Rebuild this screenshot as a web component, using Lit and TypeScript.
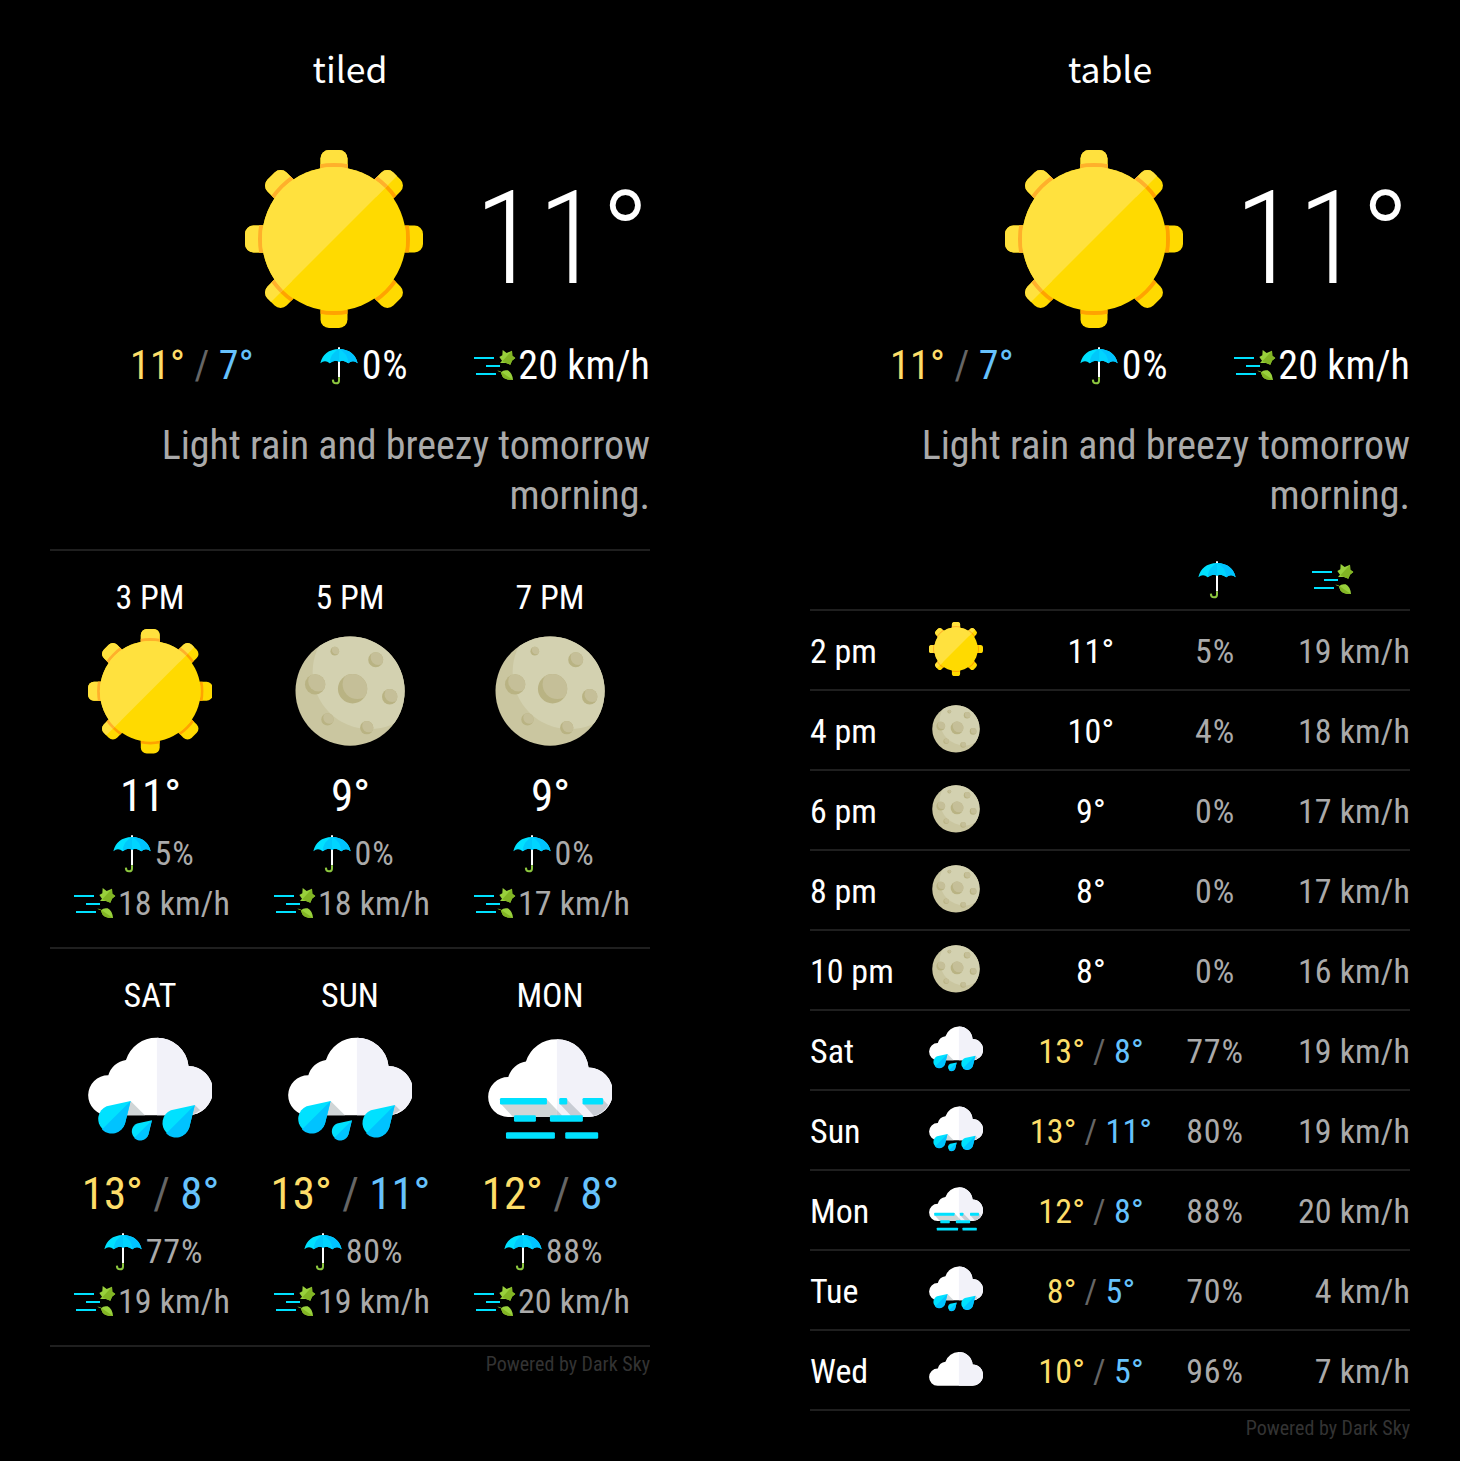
import { LitElement, html, css, svg, nothing } from "lit";
import { customElement, property } from "lit/decorators.js";

const cloudShape = svg`
  <path d="M144 436 A60 60 0 0 1 145 316 A64 64 0 0 1 198 270 A95.500 95.500 0 0 1 291 203 A95 95 0 0 1 386 288 A74 74 0 0 1 384 436 Z" fill="#fff"/>
  <path d="M291 203 A95 95 0 0 1 386 288 A74 74 0 0 1 384 436 L291 436 Z" fill="#f2f2f9"/>`;

const teeth = (fill: string) => [0, 45, 90, 135, 180, 225, 270, 315].map(
  (a) => svg`<rect x="-13.5" y="-89" width="27" height="30" rx="8.5" fill=${fill} transform="rotate(${a})"/>`,
);

const ring = (stroke: string) => svg`<circle r="74" fill="none" stroke=${stroke} stroke-width="4"/>`;

const craters: [number, number, number][] = [
  [134, 62, 13], [257, 88, 22.5], [75, 162, 30.5], [187.5, 175, 44],
  [299, 199, 23], [112, 267, 18.5], [230, 292, 20],
];

const drop = (x: number, y: number, s: number) => svg`
  <g transform="translate(${x} ${y}) scale(${s})">
    <path d="M0 0 L-72 16 A41.5 41.5 0 1 0 -17 69 Z" fill="#00e1ff"/>
    <path d="M0 0 L-86 86 A41.5 41.5 0 0 0 -17 69 Z" fill="#00c3ff"/>
  </g>`;

const bar = (x: number, y: number, w: number) =>
  svg`<rect x=${x} y=${y} width=${w} height="20" rx="4" fill="#00e1ff"/>`;

const icons: Record<string, unknown> = {
  sun: svg`<svg viewBox="-89 -89 178 178">
    <defs>
      <clipPath id="half"><path d="M-90 90 L90 -90 H-90 Z"/></clipPath>
      <clipPath id="teeth">${teeth("#000")}</clipPath>
    </defs>
    ${teeth("#ffda00")}
    <g clip-path="url(#teeth)">${ring("#ffa300")}</g>
    <circle r="72" fill="#ffda00"/>
    <g clip-path="url(#half)">
      ${teeth("#ffe13e")}
      <g clip-path="url(#teeth)">${ring("#ffb02b")}</g>
      <circle r="72" fill="#ffe13e"/>
    </g>
  </svg>`,
  moon: svg`<svg viewBox="-6.5 -4.5 374 374">
    <defs><clipPath id="disc"><circle cx="180" cy="182" r="164"/></clipPath></defs>
    <circle cx="180" cy="182" r="164" fill="#cac6a0"/>
    <circle cx="239" cy="125" r="171.5" fill="#d3d1b0" clip-path="url(#disc)"/>
    ${craters.map(([x, y, r], i) => svg`
      <clipPath id="c${i}"><circle cx=${x} cy=${y} r=${r}/></clipPath>
      <circle cx=${x} cy=${y} r=${r} fill="#b9b383"/>
      <circle cx=${x + r * 0.32} cy=${y - r * 0.3} r=${r} fill="#c5bf98" clip-path="url(#c${i})"/>`)}
  </svg>`,
  rain: svg`<svg viewBox="84 171 374 374">
    ${cloudShape}
    <path d="M212 393 L255 436 H190 Z" fill="#d0d5d6"/>
    <path d="M405 405 L421 421 Q408 432 394 435 Z" fill="#c8ccd2"/>
    ${drop(212, 393, 1)}${drop(276, 451, 0.62)}${drop(405, 405, 1)}
  </svg>`,
  fog: svg`<svg viewBox="84 171 374 374">
    <g transform="translate(0 5)">${cloudShape}</g>
    <path d="M123 402 L159 441 H291 V420 L260 388 Z" fill="#d0d5d6"/>
    <path d="M291 420 L306 436 V441 H291 Z" fill="#c8ccd4"/>
    <path d="M300 402 L334 438 H370 L320 388 Z" fill="#c8ccd4"/>
    <path d="M370 402 L402 438 Q430 430 445 405 L428 388 Z" fill="#c8ccd4"/>
    ${bar(120, 384, 141)}${bar(298, 384, 24)}${bar(368, 384, 62)}
    ${bar(162, 436, 66)}${bar(270, 436, 99)}
    ${bar(138, 487, 147)}${bar(316, 487, 99)}
  </svg>`,
  cloud: svg`<svg viewBox="84 133 374 374">${cloudShape}</svg>`,
  umbrella: svg`<svg viewBox="186 194 114 114">
    <path d="M240 195 H246 V285 H240 Z" fill="#fff"/>
    <path d="M243 285 V295 Q243 303 234 303 Q225 303 224.500 292" fill="none" stroke="#8cc63f" stroke-width="6"/>
    <path d="M187 243 Q196 202 243 200 Q290 202 299 243 Q285 230 271 243 Q257 230 243 238 Q229 230 215 243 Q201 230 187 243 Z" fill="#00e1ff"/>
    <path d="M243 200 Q290 202 299 243 Q285 230 271 243 Q257 230 243 238 Z" fill="#00c3ff"/>
    <path d="M243 200 Q217 212 215 243 Q229 230 243 238 Z" fill="#00c8fa"/>
    <path d="M243 200 Q269 212 271 243 Q257 230 243 238 Z" fill="#00d4ff"/>
  </svg>`,
  wind: svg`<svg viewBox="72 345 126 114">
    <path d="M72 378 H132 M108 402 H150 M78 426 H138" stroke="#00e1ff" stroke-width="6"/>
    <path d="M148 375 L157 370 L158 354 L170 363 L186 356 L187 371 L196 378 L186 386 L181 398 L168 393 L150 393 L156 386 Z" fill="#99d13c"/>
    <path d="M186 356 L187 371 L196 378 L186 386 L181 398 L168 393 L157 388 Z" fill="#82b524"/>
    <path d="M142 416 Q148 416 154 420 Q160 413 173 415 Q187 422 189 444 Q166 444 158 434 Q154 428 153 421 Z" fill="#99d13c"/>
    <path d="M142 416 Q148 416 154 420 L189 444 Q166 444 158 434 Q154 428 153 421 Z" fill="#82b524"/>
  </svg>`,
};

@customElement("weather-icon")
class WeatherIcon extends LitElement {
  static styles = css`
    :host { display: block; flex: none; }
    svg { display: block; width: 100%; height: 100%; }
  `;
  @property() name = "sun";
  render() { return html`${icons[this.name]}`; }
}

interface Entry { label: string; icon: string; high: string; low?: string; rain: string; wind: string; }

const tileHours: Entry[] = [
  { label: "3 PM", icon: "sun", high: "11°", rain: "5%", wind: "18 km/h" },
  { label: "5 PM", icon: "moon", high: "9°", rain: "0%", wind: "18 km/h" },
  { label: "7 PM", icon: "moon", high: "9°", rain: "0%", wind: "17 km/h" },
];
const tileDays: Entry[] = [
  { label: "SAT", icon: "rain", high: "13°", low: "8°", rain: "77%", wind: "19 km/h" },
  { label: "SUN", icon: "rain", high: "13°", low: "11°", rain: "80%", wind: "19 km/h" },
  { label: "MON", icon: "fog", high: "12°", low: "8°", rain: "88%", wind: "20 km/h" },
];
const tableRows: Entry[] = [
  { label: "2 pm", icon: "sun", high: "11°", rain: "5%", wind: "19 km/h" },
  { label: "4 pm", icon: "moon", high: "10°", rain: "4%", wind: "18 km/h" },
  { label: "6 pm", icon: "moon", high: "9°", rain: "0%", wind: "17 km/h" },
  { label: "8 pm", icon: "moon", high: "8°", rain: "0%", wind: "17 km/h" },
  { label: "10 pm", icon: "moon", high: "8°", rain: "0%", wind: "16 km/h" },
  { label: "Sat", icon: "rain", high: "13°", low: "8°", rain: "77%", wind: "19 km/h" },
  { label: "Sun", icon: "rain", high: "13°", low: "11°", rain: "80%", wind: "19 km/h" },
  { label: "Mon", icon: "fog", high: "12°", low: "8°", rain: "88%", wind: "20 km/h" },
  { label: "Tue", icon: "rain", high: "8°", low: "5°", rain: "70%", wind: "4 km/h" },
  { label: "Wed", icon: "cloud", high: "10°", low: "5°", rain: "96%", wind: "7 km/h" },
];

const temps = (e: Entry) => e.low
  ? html`<span class="high">${e.high}</span><span class="slash"> / </span><span class="low">${e.low}</span>`
  : html`${e.high}${nothing}`;

@customElement("app-root")
class AppRoot extends LitElement {
  static styles = css`
    :host {
      display: block; min-height: 1461px; background: #000; color: #fff;
      font-family: "Roboto Condensed", Roboto, sans-serif; font-stretch: 75%; font-weight: 400;
      white-space: nowrap;
    }
    .page { display: grid; grid-template-columns: 600px 600px; column-gap: 160px; padding: 0 50px; align-items: start; }
    .title { height: 150px; box-sizing: border-box; padding-top: 38px; text-align: center; font: 400 35.500px/60px "Noto Sans CJK SC", sans-serif; }
    .now { display: flex; justify-content: flex-end; height: 178px; }
    .now-icon { width: 178px; height: 178px; }
    .now-temp { width: 227px; text-align: right; font-size: 130px; font-weight: 340; line-height: 178px; }
    .details { display: flex; justify-content: space-between; margin: 13px 0 0 80px; font-size: 40px; line-height: 50px; }
    .metric { display: flex; align-items: center; justify-content: center; }
    .umbrella { width: 38px; height: 38px; margin-right: 4px; }
    .wind-icon { width: 42px; height: 38px; margin-right: 2px; }
    .high { color: #fddd68; }
    .slash { color: #666; white-space: pre; }
    .low { color: #66c2fc; }
    .spread { letter-spacing: 0.2px; }
    .rain { letter-spacing: 0.8px; }
    .wind { letter-spacing: 0.1px; }
    .summary { margin-top: 30px; height: 128px; color: #aaa; font-size: 40px; line-height: 50px; text-align: right; white-space: normal; }
    .tiles { display: grid; grid-template-columns: repeat(3, 200px); height: 396px; border-top: 2px solid #1f1f1f; }
    .tile { text-align: center; }
    .label { padding-top: 21px; font-size: 34px; line-height: 50px; }
    .tile-icon { width: 124.5px; height: 124.5px; margin: 7px auto 16.5px; }
    .temp { font-size: 45px; line-height: 52px; margin-bottom: 6px; padding-left: 1px; }
    .muted { color: #aaa; font-size: 34px; line-height: 50px; height: 50px; padding-left: 4px; }
    .muted.rain { padding-left: 7px; }
    .muted weather-icon { margin-top: 2px; }
    .credit { border-top: 2px solid #1f1f1f; text-align: right; color: #333; font-size: 20px; line-height: 34px; }
    .row { display: grid; grid-template-columns: 90px 112px 158px 90px 150px; height: 76px; padding-top: 2px; border-top: 2px solid #1f1f1f; align-items: center; font-size: 34px; line-height: 50px; text-align: center; }
    .head { height: 58px; border: 0; }
    .row .name { text-align: left; }
    .row-icon { width: 54px; height: 54px; margin: 0 auto 4px; }
    .grey { color: #aaa; }
    .right { text-align: right; }
    .head-rain { margin: 0 auto 0 28px; }
    .head-wind { margin: 0 auto 0 52px; }
  `;

  current(title: string) {
    return html`
      <div class="title">${title}</div>
      <div class="now">
        <weather-icon class="now-icon" name="sun"></weather-icon>
        <div class="now-temp">11°</div>
      </div>
      <div class="details">
        <div class="spread"><span class="high">11°</span><span class="slash"> / </span><span class="low">7°</span></div>
        <div class="metric rain"><weather-icon class="umbrella" name="umbrella"></weather-icon>0%</div>
        <div class="metric wind"><weather-icon class="wind-icon" name="wind"></weather-icon>20 km/h</div>
      </div>
      <div class="summary">Light rain and breezy tomorrow morning.</div>`;
  }

  tiles(entries: Entry[]) {
    return html`<div class="tiles">${entries.map((e) => html`
      <div class="tile">
        <div class="label">${e.label}</div>
        <weather-icon class="tile-icon" name=${e.icon}></weather-icon>
        <div class="temp">${temps(e)}</div>
        <div class="metric muted rain"><weather-icon class="umbrella" name="umbrella"></weather-icon>${e.rain}</div>
        <div class="metric muted wind"><weather-icon class="wind-icon" name="wind"></weather-icon>${e.wind}</div>
      </div>`)}</div>`;
  }

  render() {
    return html`<div class="page">
      <section>
        ${this.current("tiled")}
        ${this.tiles(tileHours)}
        ${this.tiles(tileDays)}
        <div class="credit">Powered by Dark Sky</div>
      </section>
      <section>
        ${this.current("table")}
        <div class="row head">
          <span></span><span></span><span></span>
          <weather-icon class="umbrella head-rain" name="umbrella"></weather-icon>
          <weather-icon class="wind-icon head-wind" name="wind"></weather-icon>
        </div>
        ${tableRows.map((e) => html`<div class="row">
          <span class="name">${e.label}</span>
          <weather-icon class="row-icon" name=${e.icon}></weather-icon>
          <span class="spread">${temps(e)}</span>
          <span class="grey rain">${e.rain}</span>
          <span class="grey right wind">${e.wind}</span>
        </div>`)}
        <div class="credit">Powered by Dark Sky</div>
      </section>
    </div>`;
  }
}
